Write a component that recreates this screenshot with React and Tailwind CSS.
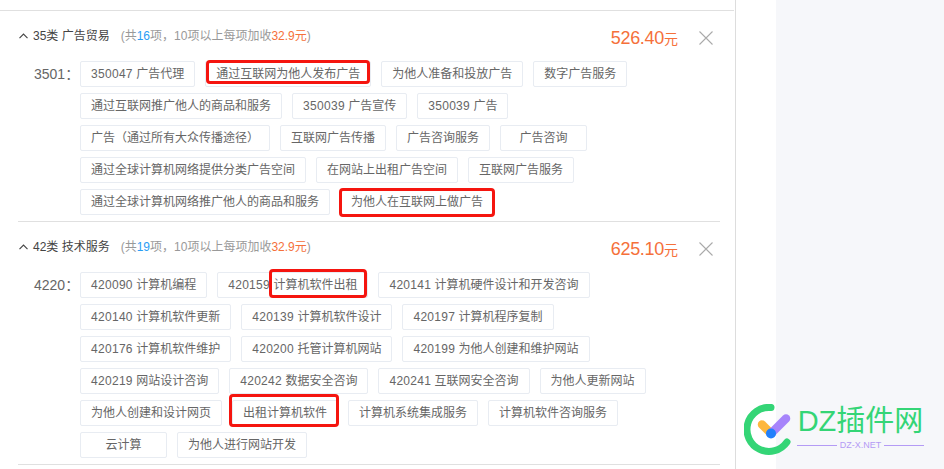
const FONT = { fontFamily: '"Liberation Sans", "Noto Sans CJK SC", sans-serif' }

const sections = [
  {
    title: '35类 广告贸易',
    count: 16,
    price: '526.40',
    code: '3501',
    chips: [
      { text: '350047 广告代理' },
      { text: '通过互联网为他人发布广告', mark: 'top-[-2px] bottom-[2px] left-0 right-0' },
      { text: '为他人准备和投放广告' },
      { text: '数字广告服务' },
      { text: '通过互联网推广他人的商品和服务' },
      { text: '350039 广告宣传' },
      { text: '350039 广告' },
      { text: '广告（通过所有大众传播途径）' },
      { text: '互联网广告传播' },
      { text: '广告咨询服务' },
      { text: '广告咨询' },
      { text: '通过全球计算机网络提供分类广告空间' },
      { text: '在网站上出租广告空间' },
      { text: '互联网广告服务' },
      { text: '通过全球计算机网络推广他人的商品和服务' },
      { text: '为他人在互联网上做广告', mark: 'top-[-2px] bottom-[-3px] left-[-2px] right-[-2px]' },
    ],
  },
  {
    title: '42类 技术服务',
    count: 19,
    price: '625.10',
    code: '4220',
    chips: [
      { text: '420090 计算机编程' },
      { text: '420159 计算机软件出租', mark: 'top-[-4px] bottom-[-1px] left-[51px] right-0' },
      { text: '420141 计算机硬件设计和开发咨询' },
      { text: '420140 计算机软件更新' },
      { text: '420139 计算机软件设计' },
      { text: '420197 计算机程序复制' },
      { text: '420176 计算机软件维护' },
      { text: '420200 托管计算机网站' },
      { text: '420199 为他人创建和维护网站' },
      { text: '420219 网站设计咨询' },
      { text: '420242 数据安全咨询' },
      { text: '420241 互联网安全咨询' },
      { text: '为他人更新网站' },
      { text: '为他人创建和设计网页' },
      { text: '出租计算机软件', mark: 'top-[-7px] bottom-[-2px] left-[-4px] right-[-2px]' },
      { text: '计算机系统集成服务' },
      { text: '计算机软件咨询服务' },
      { text: '云计算' },
      { text: '为他人进行网站开发' },
    ],
  },
]

function Chip({ text, mark }) {
  const parts = text.split(' ')
  return (
    <div className="relative h-[26px] min-w-[87px] px-[10px] flex items-center justify-center border border-[#e8ecf2] rounded-[2px] text-xs text-[#666] whitespace-nowrap">
      {parts.length > 1 ? (
        <>
          <span className="tracking-[0.3px]">{parts[0]}</span>&nbsp;{parts[1]}
        </>
      ) : (
        text
      )}
      {mark && <span className={`absolute ${mark} border-[3px] border-[#f5150f] rounded-[4px]`} />}
    </div>
  )
}

function Section({ section }) {
  return (
    <div className="pb-[6px]">
      <div className="h-[50px] flex items-center pl-[19px]">
        <svg width="9" height="6" viewBox="0 0 9 6" fill="none" stroke="#444" strokeWidth="1.1">
          <path d="M0.5 5.2 L4.5 1 L8.5 5.2" />
        </svg>
        <span className="ml-[5px] text-xs text-[#444]">{section.title}</span>
        <span className="ml-[11px] text-xs text-[#999]">
          (共<span className="text-[#2a9df4]">{section.count}</span>项，10项以上每项加收<span className="text-[#f5703a]">32.9元</span>)
        </span>
        <div className="ml-auto pt-[3px] flex items-baseline text-[#f5703a]">
          <span className="text-lg tracking-[-0.3px]">{section.price}</span>
          <span className="text-sm">元</span>
        </div>
        <svg className="ml-[20px] mr-[21px] mt-[3px]" width="16" height="16" viewBox="0 0 16 16" fill="none" stroke="#aaa" strokeWidth="1.1">
          <path d="M1.5 1.5 L14.5 14.5 M14.5 1.5 L1.5 14.5" />
        </svg>
      </div>
      <div className="flex">
        <div className="w-[80px] pl-[34px] h-[26px] flex items-center text-sm text-[#666]">{section.code}：</div>
        <div className="w-[600px] flex flex-wrap gap-x-[10px] gap-y-[6px]">
          {section.chips.map((chip) => (
            <Chip key={chip.text} text={chip.text} mark={chip.mark} />
          ))}
        </div>
      </div>
    </div>
  )
}

function WatermarkLogo() {
  return (
    <div className="absolute left-[744px] top-[404px] flex items-start">
      <svg width="48" height="52" viewBox="0 0 48 52" fill="none">
        <path d="M27 3.5 A22 22 0 1 0 43 38" stroke="#34d576" strokeWidth="7" strokeLinecap="round" />
        <path d="M18 20.5 L27 29.5" stroke="#fdb73f" strokeWidth="8.5" strokeLinecap="round" />
        <path d="M27 29.5 L42 14.5" stroke="#a684fb" strokeWidth="8.5" strokeLinecap="round" />
        <circle cx="27" cy="29.5" r="5" fill="#2280fb" />
      </svg>
      <div className="ml-[5px] w-[127px] flex flex-col items-center">
        <div className="text-[29px] leading-[34px] text-[#34d576] whitespace-nowrap">DZ插件网</div>
        <div className="w-full mt-[2px] flex items-center gap-[3px] text-[9px] leading-[10px] text-[#b49bf5]">
          <span className="flex-1 h-px bg-[#b49bf5]" />
          <span>DZ-X.NET</span>
          <span className="flex-1 h-px bg-[#b49bf5]" />
        </div>
      </div>
    </div>
  )
}

export default function App() {
  return (
    <div className="relative w-[944px] h-[469px] overflow-hidden flex bg-white" style={FONT}>
      <div className="w-[736px] h-full pt-[10px] border-r border-[#ddd]">
        <div className="border-t border-[#e0e0e0] mr-[1px]" />
        <Section section={sections[0]} />
        <div className="ml-[18px] mr-[15px] border-t border-[#e0e0e0]" />
        <Section section={sections[1]} />
        <div className="ml-[18px] mr-[15px] border-t border-[#e0e0e0]" />
      </div>
      <div className="w-[40px]" />
      <div className="flex-1 bg-[#f6f7fa]" />
      <WatermarkLogo />
    </div>
  )
}
